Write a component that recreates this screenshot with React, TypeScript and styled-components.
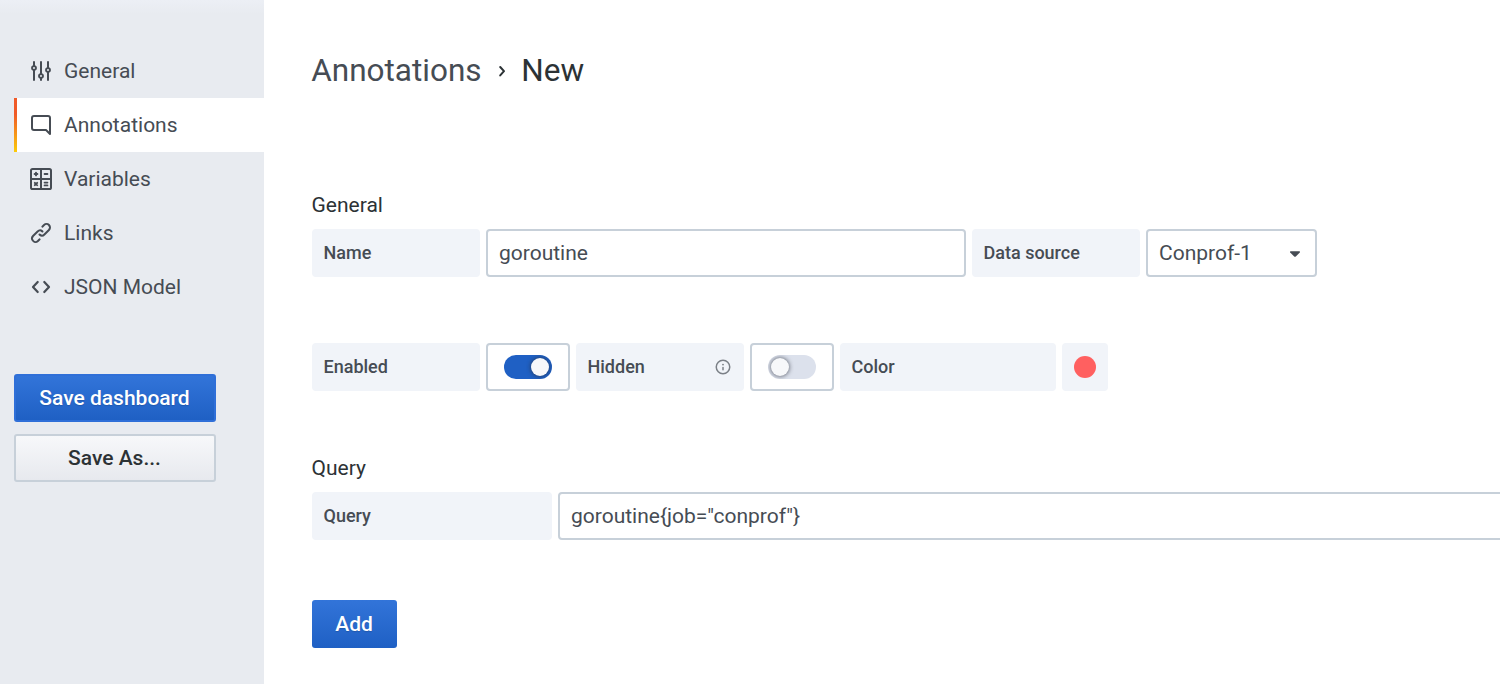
import React from "react";
import styled, { createGlobalStyle } from "styled-components";

const GlobalStyle = createGlobalStyle`
  *, *::before, *::after { box-sizing: border-box; }
  html, body { margin: 0; overflow: hidden; }
  body {
    font-family: Roboto, "Liberation Sans", sans-serif;
    font-size: 21px;
    line-height: 32px;
    color: #464c54;
    background: #fff;
  }
`;

const Page = styled.div`
  display: flex;
  height: 684px;
  overflow: hidden;
`;

const Sidebar = styled.aside`
  flex: 0 0 264px;
  padding: 44px 0 0 14px;
  background: linear-gradient(#eceff5 0, #e8ebf0 14px);
`;

const Nav = styled.nav`
  display: flex;
  flex-direction: column;
`;

const NavItem = styled.a<{ $active?: boolean }>`
  display: flex;
  align-items: center;
  gap: 11px;
  height: 54px;
  padding-left: 15px;
  white-space: nowrap;
  background: ${(p) =>
    p.$active
      ? "linear-gradient(#f05a28 30%, #fbca0a 99%) left / 3px 100% no-repeat, #fff"
      : "transparent"};
`;

const Icon = styled.svg<{ $size?: number }>`
  display: block;
  flex: none;
  width: ${(p) => p.$size ?? 24}px;
  height: ${(p) => p.$size ?? 24}px;
  fill: currentColor;
`;

const SideActions = styled.div`
  display: flex;
  flex-direction: column;
  gap: 12px;
  width: 202px;
  margin-top: 60px;
`;

const Button = styled.button<{ $secondary?: boolean }>`
  height: 48px;
  padding: 0 1px 0 0;
  border: 2px solid ${(p) => (p.$secondary ? "#c7d0d9" : "#2f6fd8")};
  border-radius: 3px;
  font: 500 21px/44px Roboto, "Liberation Sans", sans-serif;
  color: ${(p) => (p.$secondary ? "#2c3235" : "#fff")};
  text-shadow: ${(p) => (p.$secondary ? "none" : "0 1px 1px rgba(0, 0, 0, 0.15)")};
  background: ${(p) =>
    p.$secondary ? "linear-gradient(#f7f8fa, #e7e9ee)" : "linear-gradient(#3274d9, #1f60c4)"};
`;

const AddButton = styled(Button)`
  width: 85px;
  border: 0;
`;

const Main = styled.main`
  flex: 1;
  min-width: 0;
  padding: 44px 0 0 48px;
`;

const Heading = styled.h1`
  display: flex;
  align-items: center;
  height: 54px;
  margin: 0 0 91px -0.75px;
  font-size: 31.5px;
  font-weight: 400;
  color: #2c3235;
`;

const Crumb = styled.a`
  color: #464c54;
`;

const Separator = styled(Icon)`
  margin: 0 7.25px 0 8.5px;
`;

const SectionTitle = styled.h2`
  height: 32px;
  margin: 0 0 8px -0.5px;
  font-size: 21px;
  line-height: 32px;
  font-weight: 400;
  color: #2c3235;
`;

const FieldRow = styled.div<{ $after: number }>`
  display: flex;
  gap: 6px;
  height: 48px;
  margin-bottom: ${(p) => p.$after}px;
`;

const Label = styled.label<{ $width: number }>`
  display: flex;
  flex: none;
  align-items: center;
  justify-content: space-between;
  width: ${(p) => p.$width}px;
  padding: 0 12px 0 11.5px;
  border-radius: 4px;
  font-size: 18px;
  font-weight: 500;
  background: #f1f4f9;
`;

const Hint = styled(Icon)`
  color: #7b8087;
`;

const Control = styled.div<{ $width: number }>`
  display: flex;
  flex: none;
  align-items: center;
  width: ${(p) => p.$width}px;
  padding: 0 11px;
  border: 2px solid #c7d0d9;
  border-radius: 4px;
  background: #fff;
`;

const TextInput = styled.input<{ $width: number }>`
  flex: none;
  width: ${(p) => p.$width}px;
  height: 48px;
  padding: 0 11px;
  border: 2px solid #c7d0d9;
  border-radius: 4px;
  font: 400 21px/32px Roboto, "Liberation Sans", sans-serif;
  color: #464c54;
  background: #fff;
`;

const Select = styled(Control)`
  justify-content: space-between;
  padding-right: 8px;
`;

const SwitchBox = styled(Control)`
  justify-content: center;
  padding: 0;
`;

const Track = styled.span<{ $on?: boolean }>`
  display: flex;
  align-items: center;
  justify-content: ${(p) => (p.$on ? "flex-end" : "flex-start")};
  width: 48px;
  height: 24px;
  padding: 0 3px;
  border-radius: 12px;
  overflow: hidden;
  background: ${(p) => (p.$on ? "#1f60c4" : "#dce1ec")};
`;

const Knob = styled.span`
  width: 18px;
  height: 18px;
  border-radius: 50%;
  background: #f7f8fa;
  box-shadow: 0 0 4px 0.5px rgba(40, 45, 55, 0.65);
`;

const ColorPicker = styled.div`
  display: flex;
  align-items: center;
  justify-content: center;
  width: 46px;
  border-radius: 4px;
  background: #f1f4f9;
`;

const Swatch = styled.span`
  width: 22px;
  height: 22px;
  border-radius: 50%;
  background: #ff6060;
`;

const icons = {
  sliders: (
    <path d="M20,8.18V3a1,1,0,0,0-2,0V8.18a3,3,0,0,0,0,5.64V21a1,1,0,0,0,2,0V13.82a3,3,0,0,0,0-5.64ZM19,12a1,1,0,1,1,1-1A1,1,0,0,1,19,12Zm-6,2.18V3a1,1,0,0,0-2,0V14.18a3,3,0,0,0,0,5.64V21a1,1,0,0,0,2,0V19.82a3,3,0,0,0,0-5.64ZM12,18a1,1,0,1,1,1-1A1,1,0,0,1,12,18ZM6,6.18V3A1,1,0,0,0,4,3V6.18a3,3,0,0,0,0,5.64V21a1,1,0,0,0,2,0V11.82A3,3,0,0,0,6,6.18ZM5,10A1,1,0,1,1,6,9,1,1,0,0,1,5,10Z" />
  ),
  comment: (
    <path d="M19,2H5A3,3,0,0,0,2,5V15a3,3,0,0,0,3,3H16.59l3.7,3.71A1,1,0,0,0,21,22a.84.84,0,0,0,.38-.08A1,1,0,0,0,22,21V5A3,3,0,0,0,19,2Zm1,16.59-2.29-2.3A1,1,0,0,0,17,16H5a1,1,0,0,1-1-1V5A1,1,0,0,1,5,4H19a1,1,0,0,1,1,1Z" />
  ),
  calculator: (
    <g fill="none" stroke="currentColor" strokeWidth="2">
      <rect x="2" y="2" width="20" height="20" rx="1.6" />
      <path d="M12 2v20M2 12h20" />
      <g strokeWidth="1.9" strokeLinecap="round">
        <path d="M5.6 7h2.8M7 5.6v2.8M15.6 7h2.8M5.8 15.8l2.4 2.4M8.2 15.8l-2.4 2.4M15.6 15.6h2.8M15.6 18.4h2.8" />
      </g>
    </g>
  ),
  link: (
    <path d="M10,17.55,8.23,19.27a2.47,2.47,0,0,1-3.5-3.5l4.54-4.55a2.46,2.46,0,0,1,3.39-.09l.12.1a1,1,0,0,0,1.4-1.43A2.75,2.75,0,0,0,14,9.59a4.46,4.46,0,0,0-6.09.22L3.31,14.36a4.48,4.48,0,0,0,6.33,6.33L11.37,19A1,1,0,0,0,10,17.55ZM20.69,3.31a4.49,4.49,0,0,0-6.33,0L12.63,5A1,1,0,0,0,14,6.45l1.73-1.72a2.47,2.47,0,0,1,3.5,3.5l-4.54,4.55a2.46,2.46,0,0,1-3.39.09l-.12-.1a1,1,0,0,0-1.4,1.43,2.75,2.75,0,0,0,.23.21,4.47,4.47,0,0,0,6.09-.22l4.55-4.55A4.49,4.49,0,0,0,20.69,3.31Z" />
  ),
  code: (
    <path
      d="M8.7 7 4 12l4.7 5M15.3 7 20 12l-4.7 5"
      fill="none"
      stroke="currentColor"
      strokeWidth="2.2"
      strokeLinecap="round"
      strokeLinejoin="round"
    />
  ),
};

const navItems: { icon: keyof typeof icons; label: string; active?: boolean }[] = [
  { icon: "sliders", label: "General" },
  { icon: "comment", label: "Annotations", active: true },
  { icon: "calculator", label: "Variables" },
  { icon: "link", label: "Links" },
  { icon: "code", label: "JSON Model" },
];

export default function App() {
  return (
    <>
      <GlobalStyle />
      <Page>
        <Sidebar>
          <Nav>
            {navItems.map((item) => (
              <NavItem key={item.label} $active={item.active}>
                <Icon viewBox="0 0 24 24">{icons[item.icon]}</Icon>
                {item.label}
              </NavItem>
            ))}
          </Nav>
          <SideActions>
            <Button>Save dashboard</Button>
            <Button $secondary>Save As...</Button>
          </SideActions>
        </Sidebar>
        <Main>
          <Heading>
            <Crumb>Annotations</Crumb>
            <Separator viewBox="0 0 24 24">
              <path
                d="M10.2 8 14 12.2l-3.8 4.2"
                fill="none"
                stroke="currentColor"
                strokeWidth="2"
                strokeLinecap="round"
                strokeLinejoin="round"
              />
            </Separator>
            New
          </Heading>

          <SectionTitle>General</SectionTitle>
          <FieldRow $after={66}>
            <Label $width={168}>Name</Label>
            <TextInput $width={480} defaultValue="goroutine" />
            <Label $width={168}>Data source</Label>
            <Select $width={171}>
              Conprof-1
              <Icon viewBox="0 0 24 24">
                <path d="M7.6 10.3h8.8q1 .3.4 1.2l-4 4q-.8.7-1.6 0l-4-4q-.6-.9.4-1.2Z" />
              </Icon>
            </Select>
          </FieldRow>
          <FieldRow $after={61}>
            <Label $width={168}>Enabled</Label>
            <SwitchBox $width={84}>
              <Track $on>
                <Knob />
              </Track>
            </SwitchBox>
            <Label $width={168}>
              Hidden
              <Hint $size={18} viewBox="0 0 24 24">
                <path d="M12,2A10,10,0,1,0,22,12,10,10,0,0,0,12,2Zm0,18a8,8,0,1,1,8-8A8,8,0,0,1,12,20Zm0-8.5a1,1,0,0,0-1,1v3a1,1,0,0,0,2,0v-3A1,1,0,0,0,12,11.5Zm0-4a1.25,1.25,0,1,0,1.25,1.25A1.25,1.25,0,0,0,12,7.5Z" />
              </Hint>
            </Label>
            <SwitchBox $width={84}>
              <Track>
                <Knob />
              </Track>
            </SwitchBox>
            <Label $width={216}>Color</Label>
            <ColorPicker>
              <Swatch />
            </ColorPicker>
          </FieldRow>

          <SectionTitle>Query</SectionTitle>
          <FieldRow $after={60}>
            <Label $width={240}>Query</Label>
            <TextInput $width={980} defaultValue={'goroutine{job="conprof"}'} />
          </FieldRow>
          <AddButton>Add</AddButton>
        </Main>
      </Page>
    </>
  );
}
